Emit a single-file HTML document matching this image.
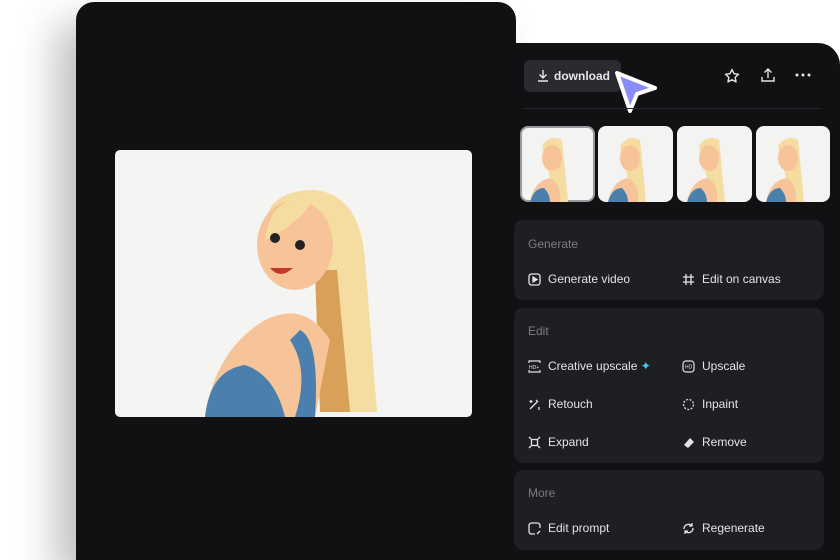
<!DOCTYPE html>
<html><head><style>
*{margin:0;padding:0;box-sizing:border-box}
html,body{width:840px;height:560px;overflow:hidden}
body{background:#fff;position:relative;font-family:"Liberation Sans",sans-serif}
.left{position:absolute;left:76px;top:2px;width:440px;height:558px;background:#111113;border-radius:18px 18px 0 0;box-shadow:-20px 20px 40px rgba(0,0,0,.25)}
.panel{position:absolute;left:513px;top:43px;width:327px;height:517px;background:#111113;border-radius:0 22px 0 0}
.img{position:absolute;left:115px;top:150px;width:357px;height:267px;background:#f4f4f2;border-radius:5px;overflow:hidden}
.dl{position:absolute;left:524px;top:60px;width:97px;height:32px;background:#2a2b31;border-radius:6px;color:#e6e6e8;font-size:12px;font-weight:bold;line-height:32px;padding-left:30px}
.sep{position:absolute;left:524px;top:108px;width:296px;height:1px;background:#26272b}
.th{position:absolute;top:126px;width:75px;height:76px;background:#f3f3f1;border-radius:8px;overflow:hidden}
.sec{position:absolute;left:514px;width:310px;background:#1e1f23;border-radius:9px}
.h{position:absolute;left:14px;font-size:12px;color:#7c7d83}
.it{position:absolute;font-size:12px;color:#e4e4e7;padding-left:20px}
.it svg{position:absolute;left:0;top:1px}
</style></head><body>
<div class="left"></div>
<div class="img">
<svg width="357" height="267" viewBox="0 0 357 267">
<path d="M150 80 Q150 40 200 40 Q245 45 250 110 L262 262 L205 262 L200 120 Z" fill="#f5dca0"/>
<path d="M200 120 L205 262 L235 262 L222 120Z" fill="#d9a05a"/>
<ellipse cx="180" cy="95" rx="38" ry="45" fill="#f7c49a"/>
<path d="M150 90 Q155 45 200 45 Q190 70 150 90Z" fill="#f5dca0"/>
<circle cx="160" cy="88" r="5" fill="#222"/><circle cx="185" cy="95" r="5" fill="#222"/>
<path d="M155 118 Q165 130 178 118Z" fill="#c0392b"/>
<path d="M150 170 Q190 150 215 190 L200 267 L90 267 Q100 200 150 170Z" fill="#f7c49a"/>
<path d="M90 267 Q95 220 130 215 Q160 225 170 267Z" fill="#4a7fae"/>
<path d="M185 180 Q205 190 200 267 L180 267 Q195 220 175 190Z" fill="#4a7fae"/>
</svg></div>
<div class="panel"></div>
<div class="dl"><svg style="position:absolute;left:13px;top:9px" width="12" height="13" viewBox="0 0 12 13" fill="none" stroke="#e6e6e8" stroke-width="1.4"><path d="M6 1v8M2.5 5.5 6 9l3.5-3.5M1 12h10"/></svg>download</div>
<svg style="position:absolute;left:610px;top:66px" width="50" height="50" viewBox="0 0 50 50"><path d="M7 7 L45 22 L27 28 L20 45 Z" fill="#8b8cf8" stroke="#fff" stroke-width="4" stroke-linejoin="round"/></svg>
<svg style="position:absolute;left:724px;top:68px" width="16" height="16" viewBox="0 0 16 16" fill="none" stroke="#e6e6e8" stroke-width="1.4" stroke-linejoin="round"><path d="M8 1.5l2 4.2 4.5.6-3.3 3.1.8 4.5L8 11.7 4 13.9l.8-4.5L1.5 6.3 6 5.7z"/></svg>
<svg style="position:absolute;left:760px;top:67px" width="16" height="16" viewBox="0 0 16 16" fill="none" stroke="#e6e6e8" stroke-width="1.4"><path d="M8 11V2M4.5 5.5 8 2l3.5 3.5M2 10v4h12v-4"/></svg>
<svg style="position:absolute;left:795px;top:73px" width="16" height="4"><circle cx="2" cy="2" r="1.5" fill="#e6e6e8"/><circle cx="8" cy="2" r="1.5" fill="#e6e6e8"/><circle cx="14" cy="2" r="1.5" fill="#e6e6e8"/></svg>
<div class="sep"></div>
<div class="th" style="left:520px;border:2px solid #9a9a9e"></div>
<div class="th" style="left:598px"></div>
<div class="th" style="left:677px"></div>
<div class="th" style="left:756px;width:74px"></div>
<svg style="position:absolute;left:520px;top:126px" width="310" height="76" viewBox="0 0 310 76">
<g id="g"><path d="M22 20 Q30 8 42 14 L48 76 L36 76Z" fill="#f5dca0"/><ellipse cx="32" cy="32" rx="10" ry="13" fill="#f7c49a"/><path d="M10 76 Q14 55 30 52 Q42 58 40 76Z" fill="#f7c49a"/><path d="M10 76 Q14 62 24 62 Q30 68 30 76Z" fill="#4a7fae"/></g>
<use href="#g" x="78"/><use href="#g" x="157"/><use href="#g" x="236"/></svg>
<div class="sec" style="top:220px;height:80px"><div class="h" style="top:17px">Generate</div>
<div class="it" style="left:14px;top:52px"><svg width="13" height="13" fill="none" stroke="#e4e4e7" stroke-width="1.3"><rect x="1" y="1" width="11" height="11" rx="2.5"/><path d="M5 4v5l4-2.5z" fill="#e4e4e7"/></svg>Generate video</div>
<div class="it" style="left:168px;top:52px"><svg width="13" height="13" fill="none" stroke="#e4e4e7" stroke-width="1.3"><path d="M4 1v11M9 1v11M1 4h11M1 9h11"/></svg>Edit on canvas</div></div>
<div class="sec" style="top:308px;height:155px"><div class="h" style="top:16px">Edit</div>
<div class="it" style="left:14px;top:51px"><svg width="13" height="13" fill="none" stroke="#e4e4e7" stroke-width="1.2"><path d="M1 3V1h11v2M1 10v2h11v-2"/><text x="1" y="9" font-size="5" fill="#e4e4e7" stroke="none">HD+</text></svg>Creative upscale <span style="color:#3ad0ea">✦</span></div>
<div class="it" style="left:168px;top:51px"><svg width="13" height="13" fill="none" stroke="#e4e4e7" stroke-width="1.2"><rect x="1" y="1" width="11" height="11" rx="3"/><text x="3" y="8.5" font-size="5" fill="#e4e4e7" stroke="none">HD</text></svg>Upscale</div>
<div class="it" style="left:14px;top:89px"><svg width="13" height="13" fill="none" stroke="#e4e4e7" stroke-width="1.3"><path d="M2 11 9 4M8 2l2 2M3 2v3M1.5 3.5h3M11 9v3"/></svg>Retouch</div>
<div class="it" style="left:168px;top:89px"><svg width="13" height="13" fill="none" stroke="#e4e4e7" stroke-width="1.3" stroke-dasharray="2 1.5"><circle cx="6.5" cy="6.5" r="5"/></svg>Inpaint</div>
<div class="it" style="left:14px;top:127px"><svg width="13" height="13" fill="none" stroke="#e4e4e7" stroke-width="1.3"><rect x="3.5" y="3.5" width="6" height="6"/><path d="M1 1l2 2M12 1l-2 2M1 12l2-2M12 12l-2-2"/></svg>Expand</div>
<div class="it" style="left:168px;top:127px"><svg width="13" height="13"><path d="M2 9 8 2l4 4-6 6z" fill="#e4e4e7"/></svg>Remove</div></div>
<div class="sec" style="top:470px;height:80px"><div class="h" style="top:16px">More</div>
<div class="it" style="left:14px;top:51px"><svg width="13" height="13" fill="none" stroke="#e4e4e7" stroke-width="1.3"><path d="M12 6V3.5A2.5 2.5 0 0 0 9.5 1h-6A2.5 2.5 0 0 0 1 3.5v6A2.5 2.5 0 0 0 3.5 12H7M9 12l3-3"/></svg>Edit prompt</div>
<div class="it" style="left:168px;top:51px"><svg width="13" height="13" fill="none" stroke="#e4e4e7" stroke-width="1.3"><path d="M2 7a4.5 4.5 0 0 1 8-3M11 6a4.5 4.5 0 0 1-8 3M10 1v3H7M3 12V9h3"/></svg>Regenerate</div></div>
</body></html>
